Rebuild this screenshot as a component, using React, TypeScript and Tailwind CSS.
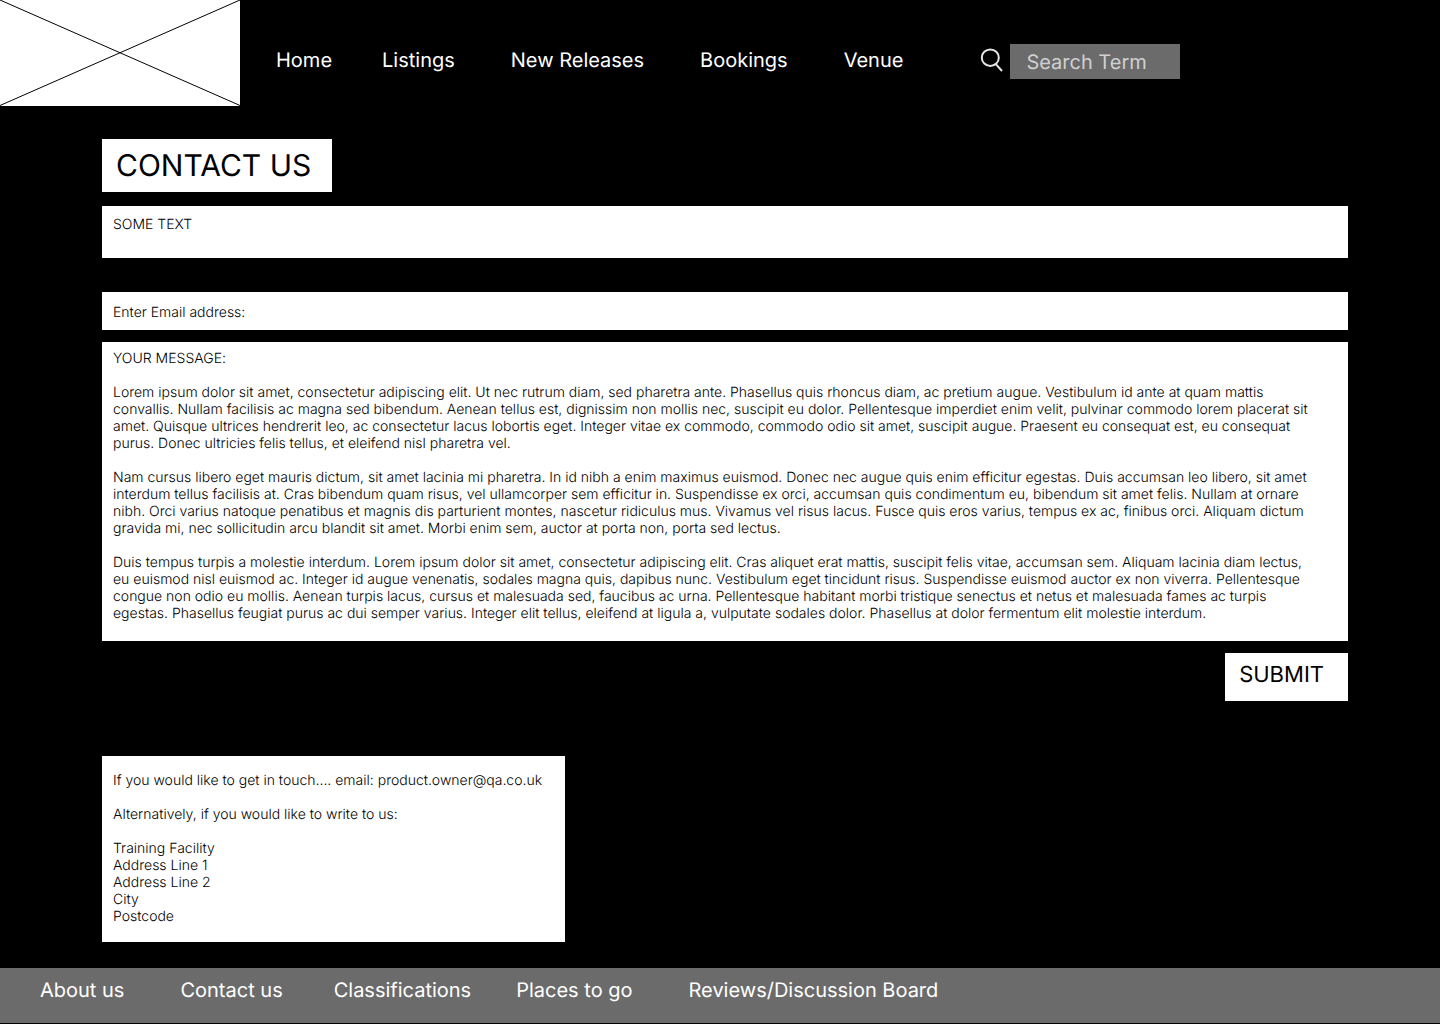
const navLinks = [
  { label: 'Home', gap: 'mr-[50px]' },
  { label: 'Listings', gap: 'mr-[56px]' },
  { label: 'New Releases', gap: 'mr-[56px]' },
  { label: 'Bookings', gap: 'mr-[56px]' },
  { label: 'Venue', gap: '' },
];

const footerLinks = [
  { label: 'About us', gap: 'mr-[56px]' },
  { label: 'Contact us', gap: 'mr-[51px]' },
  { label: 'Classifications', gap: 'mr-[45px]' },
  { label: 'Places to go', gap: 'mr-[56px]' },
  { label: 'Reviews/Discussion Board', gap: '' },
];

const message = `Lorem ipsum dolor sit amet, consectetur adipiscing elit. Ut nec rutrum diam, sed pharetra ante. Phasellus quis rhoncus diam, ac pretium augue. Vestibulum id ante at quam mattis convallis. Nullam facilisis ac magna sed bibendum. Aenean tellus est, dignissim non mollis nec, suscipit eu dolor. Pellentesque imperdiet enim velit, pulvinar commodo lorem placerat sit amet. Quisque ultrices hendrerit leo, ac consectetur lacus lobortis eget. Integer vitae ex commodo, commodo odio sit amet, suscipit augue. Praesent eu consequat est, eu consequat purus. Donec ultricies felis tellus, et eleifend nisl pharetra vel.

Nam cursus libero eget mauris dictum, sit amet lacinia mi pharetra. In id nibh a enim maximus euismod. Donec nec augue quis enim efficitur egestas. Duis accumsan leo libero, sit amet interdum tellus facilisis at. Cras bibendum quam risus, vel ullamcorper sem efficitur in. Suspendisse ex orci, accumsan quis condimentum eu, bibendum sit amet felis. Nullam at ornare nibh. Orci varius natoque penatibus et magnis dis parturient montes, nascetur ridiculus mus. Vivamus vel risus lacus. Fusce quis eros varius, tempus ex ac, finibus orci. Aliquam dictum gravida mi, nec sollicitudin arcu blandit sit amet. Morbi enim sem, auctor at porta non, porta sed lectus.

Duis tempus turpis a molestie interdum. Lorem ipsum dolor sit amet, consectetur adipiscing elit. Cras aliquet erat mattis, suscipit felis vitae, accumsan sem. Aliquam lacinia diam lectus, eu euismod nisl euismod ac. Integer id augue venenatis, sodales magna quis, dapibus nunc. Vestibulum eget tincidunt risus. Suspendisse euismod auctor ex non viverra. Pellentesque congue non odio eu mollis. Aenean turpis lacus, cursus et malesuada sed, faucibus ac urna. Pellentesque habitant morbi tristique senectus et netus et malesuada fames ac turpis egestas. Phasellus feugiat purus ac dui semper varius. Integer elit tellus, eleifend at ligula a, vulputate sodales dolor. Phasellus at dolor fermentum elit molestie interdum.`;

export default function App() {
  return (
    <div className="flex min-h-screen flex-col bg-black font-['Inter',sans-serif] text-sm leading-[17px] font-light text-black [font-variant-ligatures:none] [text-rendering:geometricPrecision]">
      <header className="flex items-start">
        <a href="#home" aria-label="Home page" className="block shrink-0 bg-white">
          <svg width="240" height="106" viewBox="0 0 240 106" stroke="black" strokeWidth="1" fill="none">
            <path d="M0 0L240 105.500M0 105.500L240 0" />
          </svg>
        </a>
        <nav aria-label="Main" className="mt-12 ml-9 flex text-xl leading-6 font-normal whitespace-nowrap text-white">
          {navLinks.map((link) => (
            <a key={link.label} href="#" className={link.gap}>
              {link.label}
            </a>
          ))}
        </nav>
        <form role="search" className="mt-11 ml-[77px] flex" onSubmit={(e) => e.preventDefault()}>
          <button type="submit" aria-label="Search" className="mt-1 mr-[6px] self-start">
            <svg width="24" height="26" viewBox="0 0 24 26" fill="none" stroke="#e5e5e5" strokeWidth="2">
              <ellipse cx="10.300" cy="9.700" rx="8.500" ry="8.300" />
              <path d="M15.800 16.200L22 23" />
            </svg>
          </button>
          <input
            type="text"
            aria-label="Search term"
            placeholder="Search Term"
            className="h-[35px] w-[170px] bg-[#6b6b6b] pl-4 text-xl leading-6 font-normal text-white outline-none [text-rendering:geometricPrecision] placeholder:text-[#d0d0d0]"
          />
        </form>
      </header>

      <main className="mt-[33px] mr-[92px] mb-[26px] ml-[102px] flex flex-col items-start">
        <h1 className="bg-white pt-[9px] pr-[21px] pb-2 pl-[14px] text-[30px] leading-9 font-normal">CONTACT US</h1>
        <p className="mt-[14px] w-full bg-white px-[11px] pt-[10px] pb-[25px]">SOME TEXT</p>
        <form className="mt-[34px] flex w-full flex-col" onSubmit={(e) => e.preventDefault()}>
          <div className="flex bg-white px-[11px] pt-3 pb-[9px]">
            <label htmlFor="email">Enter Email address:</label>
            <input id="email" type="email" className="ml-2 h-[17px] grow outline-none" />
          </div>
          <div className="mt-3 flex flex-col bg-white px-[11px] pt-2 pb-[19px]">
            <label htmlFor="message">YOUR MESSAGE:</label>
            <textarea
              id="message"
              defaultValue={message}
              className="mt-[17px] field-sizing-content w-full resize-none overflow-hidden pr-5 outline-none [font-variant-ligatures:none] [text-rendering:geometricPrecision]"
            />
          </div>
          <button type="submit" className="mt-3 self-end bg-white pt-2 pr-6 pb-3 pl-[14px] text-[22px] leading-7 font-normal [text-rendering:geometricPrecision]">
            SUBMIT
          </button>
        </form>
        <section className="mt-[55px] flex flex-col gap-[17px] bg-white pt-4 pr-[23px] pb-[17px] pl-[11px]">
          <p>
            If you would like to get in touch.... email: <a href="mailto:product.owner@qa.co.uk">product.owner@qa.co.uk</a>
          </p>
          <p>Alternatively, if you would like to write to us:</p>
          <address className="not-italic">
            Training Facility
            <br />
            Address Line 1
            <br />
            Address Line 2
            <br />
            City
            <br />
            Postcode
          </address>
        </section>
      </main>

      <footer className="mb-px bg-[#6b6b6b] px-10 pt-[10px] pb-[21px]">
        <nav aria-label="Footer" className="flex text-xl leading-6 font-normal text-white">
          {footerLinks.map((link) => (
            <a key={link.label} href="#" className={link.gap}>
              {link.label}
            </a>
          ))}
        </nav>
      </footer>
    </div>
  );
}
